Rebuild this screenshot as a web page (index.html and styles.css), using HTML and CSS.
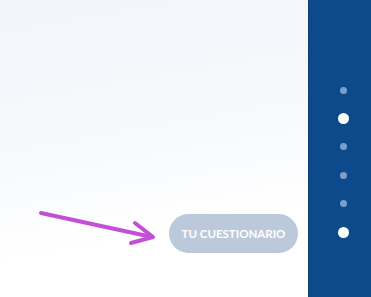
FILE: index.html
```html
<!DOCTYPE html>
<html lang="es">
<head>
  <meta charset="UTF-8" />
  <meta name="viewport" content="width=device-width, initial-scale=1.0" />
  <title>Tu cuestionario</title>
  <link rel="stylesheet" href="styles.css">
</head>
<body>
  <div id="page">
    <div id="main">
      <!-- Flecha que señala el botón -->
      <svg id="pointer" width="160" height="60" viewBox="0 0 160 60">
        <line x1="41" y1="13" x2="152" y2="37" />
        <polyline points="135,23 153,37 131,43" />
      </svg>
      <button id="quiz-button">TU CUESTIONARIO</button>
    </div>

    <!-- Navegazione a punti -->
    <div id="sidebar">
      <ul id="dots">
        <li><span class="dot"></span></li>
        <li><span class="dot active"></span></li>
        <li><span class="dot"></span></li>
        <li><span class="dot"></span></li>
        <li><span class="dot"></span></li>
        <li><span class="dot active"></span></li>
      </ul>
    </div>
  </div>
</body>
</html>
```

FILE: styles.css
```css
body {
  margin: 0;
  padding: 0;
  font-family: Lato, "Liberation Sans", Arial, sans-serif;
  height: 100vh;
  overflow: hidden;
}
#page {
  display: flex;
  height: 100%;
}
#main {
  flex: 1;
  position: relative;
  display: flex;
  flex-direction: column;
  justify-content: flex-end;
  align-items: flex-end;
  padding: 0 10px 44px 0;
  background: linear-gradient(170deg, #f2f5fa 0%, #f7f9fc 45%, #ffffff 75%);
}
#pointer {
  position: absolute;
  left: 0;
  top: 200px;
  fill: none;
  stroke: #c24fd6;
  stroke-width: 4;
  stroke-linecap: round;
  stroke-linejoin: round;
}
#quiz-button {
  width: 129px;
  height: 39px;
  border: none;
  border-radius: 20px;
  background-color: #bcc9da;
  color: white;
  font-family: Lato, "Liberation Sans", Arial, sans-serif;
  font-weight: bold;
  font-size: 11.5px;
  padding: 0;
  cursor: pointer;
}
#sidebar {
  width: 62px;
  background-color: #0c4a8b;
  border-left: 1px solid #0a3f78;
}
#dots {
  list-style-type: none;
  margin: 0;
  padding: 76px 0 0 7px;
}
#dots li {
  height: 28.4px;
  display: flex;
  justify-content: center;
  align-items: center;
}
.dot {
  width: 7px;
  height: 7px;
  border-radius: 50%;
  background-color: #7b9fcc;
}
.dot.active {
  width: 11px;
  height: 11px;
  background-color: white;
}
```
